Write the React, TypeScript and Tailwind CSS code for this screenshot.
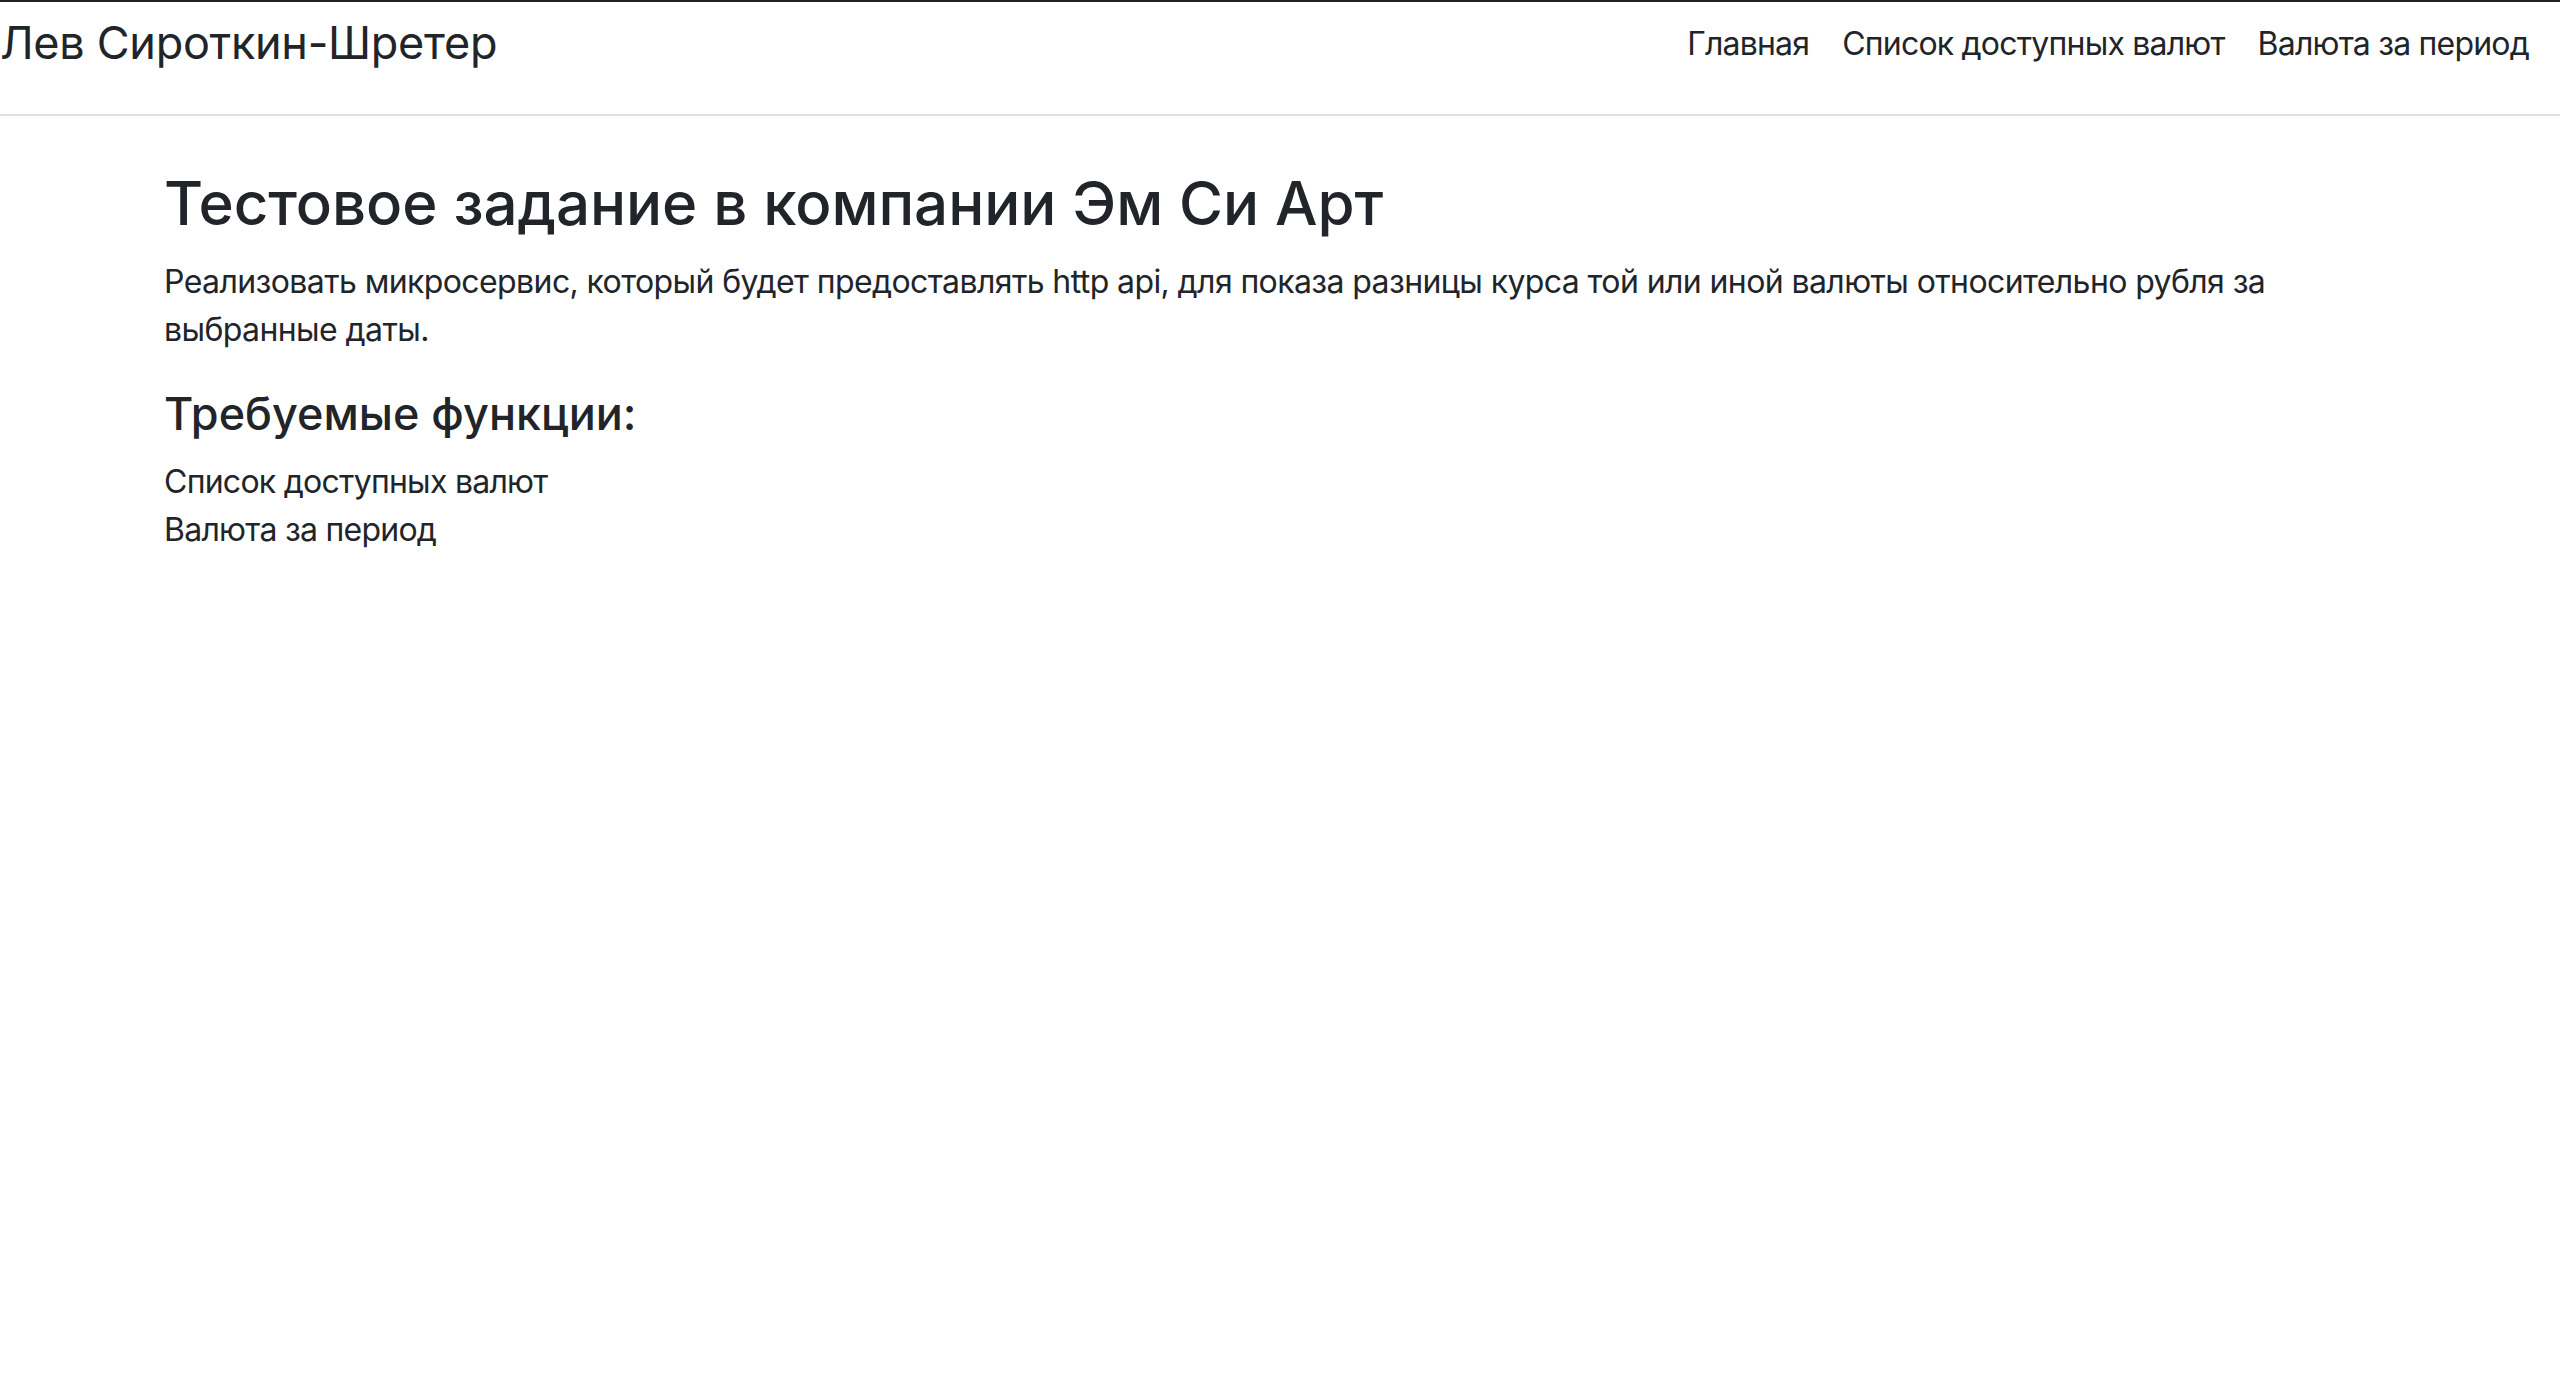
import React from "react";

export default function App() {
  return (
    <div
      className="min-h-[1380px] bg-white text-[#212529]"
      style={{ fontFamily: "Inter, 'Noto Sans', sans-serif" }}
    >
      <div className="h-[2px] bg-[#222222]" />
      <nav className="flex h-[114px] items-start justify-between border-b-2 border-[#dee2e6]">
        <a className="mt-[18px] block text-[45px] leading-none tracking-[-0.3px] text-[#212529]">
          Лев Сироткин-Шретер
        </a>
        <ul className="mt-[26px] mr-[31px] flex gap-[33px] text-[32px] leading-none tracking-[-0.8px]">
          <li>Главная</li>
          <li>Список доступных валют</li>
          <li>Валюта за период</li>
        </ul>
      </nav>
      <main className="mx-auto w-[2280px] px-[24px] pt-[51px]">
        <h1 className="mb-[19px] text-[60px] font-medium leading-[72px] tracking-[-0.05px]">
          Тестовое задание в компании Эм Си Арт
        </h1>
        <p className="mb-[33px] text-[32px] leading-[48px] tracking-[-0.6px]">
          Реализовать микросервис, который будет предоставлять http api, для показа разницы курса той или иной валюты относительно рубля за выбранные даты.
        </p>
        <h2 className="mb-[17px] text-[45px] font-medium leading-[54px]">
          Требуемые функции:
        </h2>
        <div className="text-[32px] leading-[48px] tracking-[-0.75px]">
          <div>Список доступных валют</div>
          <div>Валюта за период</div>
        </div>
      </main>
    </div>
  );
}
